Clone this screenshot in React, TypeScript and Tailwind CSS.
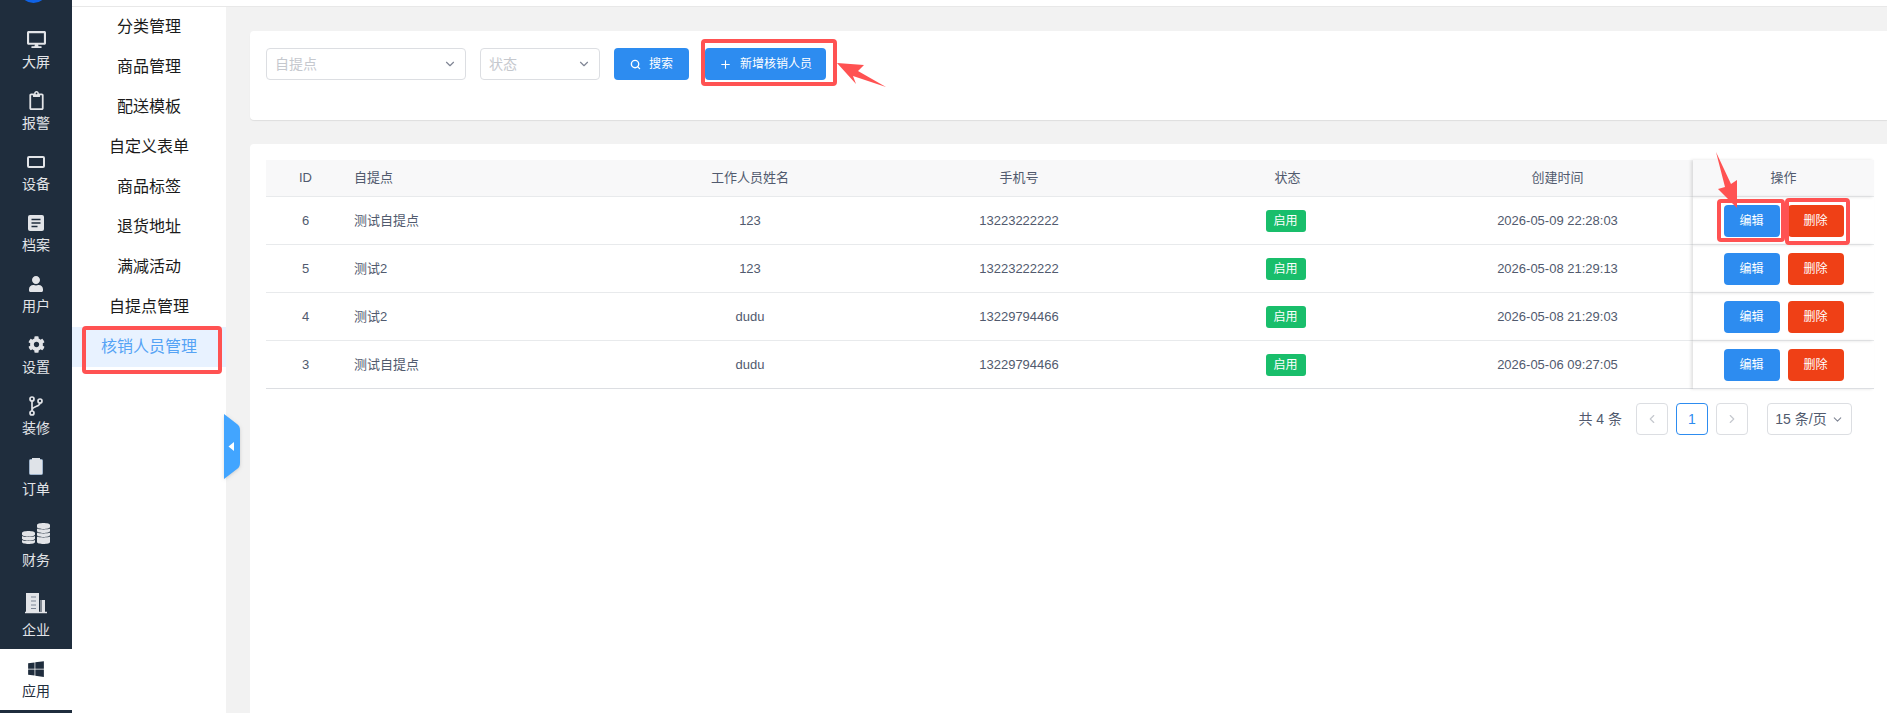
import React from 'react';
import { FaCog, FaDesktop, FaRegClipboard, FaUser, FaWindows } from 'react-icons/fa';
import { ChevronDown, ChevronLeft, ChevronRight, Plus, Search } from 'lucide-react';

const FONT = 'font-["Liberation_Sans","Noto_Sans_CJK_SC",sans-serif]';

const ScreenIcon = () => (
  <svg width="18" height="12" viewBox="0 0 18 12">
    <rect x="1" y="1" width="16" height="10" rx="1" fill="none" stroke="currentColor" strokeWidth="2" />
  </svg>
);

const FileIcon = () => (
  <svg width="16" height="16" viewBox="0 0 16 16">
    <rect width="16" height="16" rx="2" fill="currentColor" />
    <path d="M3.500 4.500h9M3.500 8h9M3.500 11.500h6" stroke="#1f2d3d" strokeWidth="1.600" />
  </svg>
);

const BranchIcon = () => (
  <svg width="14" height="20" viewBox="0 0 14 20" fill="none" stroke="currentColor" strokeWidth="1.700">
    <circle cx="3" cy="3" r="2" />
    <circle cx="11" cy="5" r="2" />
    <circle cx="3" cy="17" r="2" />
    <path d="M3 5v10M11 7c0 4-8 3-8 7" />
  </svg>
);

const OrderIcon = () => (
  <svg width="14" height="17" viewBox="0 0 14 17">
    <rect x="0.500" y="1.500" width="13" height="15" rx="1" fill="#dfe3e8" stroke="#9fb4cc" />
    <rect x="3" y="0" width="8" height="3" fill="#dfe3e8" />
  </svg>
);

const CoinsIcon = () => (
  <svg width="28" height="21" viewBox="0 0 28 21" fill="currentColor">
    <path d="M0 10c0-1.300 3-2 6.500-2s6.500.7 6.500 2v1.500c0 1.300-3 2-6.500 2S0 12.800 0 11.500zM0 13c2 1.200 11 1.200 13 0v2.500c0 1.300-3 2-6.500 2S0 16.800 0 15.500zM0 17c2 1.200 11 1.200 13 0v2c0 1.300-3 2-6.500 2S0 20.300 0 19z" />
    <path d="M15 2c0-1.300 3-2 6.500-2S28 .7 28 2v2c0 1.300-3 2-6.500 2S15 5.300 15 4zM15 5.500c2 1.200 11 1.200 13 0V8c0 1.300-3 2-6.500 2S15 9.300 15 8zM15 9.500c2 1.200 11 1.200 13 0V12c0 1.300-3 2-6.500 2S15 13.300 15 12zM15 13.500c2 1.200 11 1.200 13 0V19c0 1.300-3 2-6.500 2S15 20.300 15 19z" />
  </svg>
);

const BuildingIcon = () => (
  <svg width="22" height="21" viewBox="0 0 22 21">
    <path d="M1 0h13v19H1z" fill="currentColor" />
    <path d="M15 7h5v12h-5z" fill="currentColor" />
    <path d="M0 19.500h22" stroke="currentColor" strokeWidth="1.500" />
    <path d="M6 4h5M6 8h5M6 12h5M6 15.500h5" stroke="#7a8494" strokeWidth="1.200" />
    <path d="M16 7v12" stroke="#1f2d3d" strokeWidth="1" />
  </svg>
);

const railItems: { label: string; icon: React.ReactNode; className?: string }[] = [
  { label: '大屏', icon: <FaDesktop size={19} /> },
  { label: '报警', icon: <FaRegClipboard size={19} /> },
  { label: '设备', icon: <ScreenIcon /> },
  { label: '档案', icon: <FileIcon /> },
  { label: '用户', icon: <FaUser size={16} /> },
  { label: '设置', icon: <FaCog size={17} /> },
  { label: '装修', icon: <BranchIcon /> },
  { label: '订单', icon: <OrderIcon /> },
  { label: '财务', icon: <CoinsIcon />, className: '!h-[76px] !gap-[6px]' },
  { label: '企业', icon: <BuildingIcon />, className: '!h-[65px] !gap-[6px]' },
  { label: '应用', icon: <FaWindows size={18} />, className: 'bg-white text-[#1f2d3d]' },
];

const subMenu = ['分类管理', '商品管理', '配送模板', '自定义表单', '商品标签', '退货地址', '满减活动', '自提点管理', '核销人员管理'];

const rows = [
  { id: 6, point: '测试自提点', name: '123', phone: '13223222222', time: '2026-05-09 22:28:03' },
  { id: 5, point: '测试2', name: '123', phone: '13223222222', time: '2026-05-08 21:29:13' },
  { id: 4, point: '测试2', name: 'dudu', phone: '13229794466', time: '2026-05-08 21:29:03' },
  { id: 3, point: '测试自提点', name: 'dudu', phone: '13229794466', time: '2026-05-06 09:27:05' },
];

const Select: React.FC<{ placeholder: string; className: string }> = ({ placeholder, className }) => (
  <div className={`flex h-8 items-center justify-between rounded border border-[#dcdee2] bg-white pl-2 pr-2 text-sm text-[#c5c8ce] ${className}`}>
    <span>{placeholder}</span>
    <ChevronDown size={14} className="text-[#808695]" />
  </div>
);

const PageBox: React.FC<{ className?: string; children: React.ReactNode }> = ({ className = 'border-[#dcdee2] text-[#c5c8ce]', children }) => (
  <div className={`flex h-8 w-8 items-center justify-center rounded border bg-white ${className}`}>{children}</div>
);

const App: React.FC = () => {
  return (
    <div className={`relative flex h-[713px] w-[1887px] overflow-hidden bg-[#f2f2f2] ${FONT}`}>
      {/* 左侧主导航 */}
      <aside className="relative flex w-[72px] shrink-0 flex-col bg-[#1f2d3d] pt-5 text-[#e2e4e8]">
        <div className="absolute left-[19px] top-[-26px] h-[29px] w-[29px] rounded-full bg-[#0f62e6]" />
        {railItems.map((item) => (
          <div
            key={item.label}
            className={`flex h-[61px] shrink-0 flex-col items-center justify-center gap-[2px] text-sm ${item.className ?? ''}`}
          >
            <span className="flex h-[21px] items-center">{item.icon}</span>
            <span className="leading-5">{item.label}</span>
          </div>
        ))}
      </aside>

      <div className="flex min-w-0 flex-1 flex-col">
        <div className="h-[7px] shrink-0 border-b border-[#e8e8e8] bg-white" />
        <div className="flex min-h-0 flex-1">
          {/* 二级菜单 */}
          <nav className="relative w-[154px] shrink-0 bg-white">
            {subMenu.map((name, i) => (
              <div
                key={name}
                className={`flex h-10 items-center justify-center text-base ${i === subMenu.length - 1 ? 'bg-[#e8f2ff] text-[#55a3f5]' : 'text-[#1a1a1a]'}`}
              >
                {name}
              </div>
            ))}
            <svg className="absolute left-[152px] top-[407px] drop-shadow" width="16" height="65" viewBox="0 0 16 65">
              <path d="M0 0L13 10Q16 12 16 16V49Q16 53 13 55L0 65Z" fill="#42a5ff" />
              <path d="M10 28V37L4.500 32.500Z" fill="#fff" />
            </svg>
          </nav>

          <main className="min-w-0 flex-1 pl-6 pt-6 text-[13px] text-[#515a6e]">
            <section className="flex h-[89px] items-start gap-[14px] rounded-l bg-white pl-4 pt-[17px] shadow-[0_1px_1px_rgba(0,0,0,0.08)]">
              <Select placeholder="自提点" className="w-[200px]" />
              <Select placeholder="状态" className="w-[120px]" />
              <button className="flex h-8 w-[75px] items-center justify-center gap-2 rounded bg-[#2d8cf0] text-xs text-white">
                <Search size={11} strokeWidth={3} />
                搜索
              </button>
              <button className="ml-[2px] flex h-8 w-[121px] items-center justify-center gap-2 rounded bg-[#2d8cf0] text-xs text-white">
                <Plus size={13} />
                新增核销人员
              </button>
            </section>

            <section className="mt-6 h-[600px] rounded-l bg-white pl-4 pt-4">
              <table className="w-[1608px] table-fixed border-separate border-spacing-0">
                <colgroup>
                  <col className="w-[79px]" />
                  <col className="w-[270px]" />
                  <col className="w-[270px]" />
                  <col className="w-[268px]" />
                  <col className="w-[269px]" />
                  <col className="w-[271px]" />
                  <col className="w-[181px]" />
                </colgroup>
                <thead>
                  <tr className="bg-[#f8f8f9] [&>th]:h-[37px] [&>th]:border-b [&>th]:border-[#e8eaec] [&>th]:font-normal">
                    <th>ID</th>
                    <th className="pl-[9px] text-left">自提点</th>
                    <th>工作人员姓名</th>
                    <th>手机号</th>
                    <th>状态</th>
                    <th>创建时间</th>
                    <th className="shadow-[-2px_0_3px_rgba(0,0,0,0.12)]">操作</th>
                  </tr>
                </thead>
                <tbody>
                  {rows.map((row, i) => (
                    <tr key={row.id + row.time} className={`text-center [&>td]:h-12 [&>td]:border-b ${i === rows.length - 1 ? '[&>td]:border-[#dcdee2]' : '[&>td]:border-[#e8eaec]'}`}>
                      <td>{row.id}</td>
                      <td className="pl-[9px] text-left">{row.point}</td>
                      <td>{row.name}</td>
                      <td>{row.phone}</td>
                      <td>
                        <span className="mr-1 inline-flex h-[22px] w-10 items-center justify-center rounded-[3px] bg-[#19be6b] text-xs text-white">启用</span>
                      </td>
                      <td>{row.time}</td>
                      <td className="shadow-[-2px_0_3px_rgba(0,0,0,0.12)]">
                        <div className="flex justify-center gap-2">
                          <button className="h-8 w-14 rounded bg-[#2d8cf0] text-xs text-white">编辑</button>
                          <button className="h-8 w-14 rounded bg-[#ef4016] text-xs text-white">删除</button>
                        </div>
                      </td>
                    </tr>
                  ))}
                </tbody>
              </table>

              <div className="mt-[14px] flex w-[1586px] items-center justify-end text-sm text-[#515a6e]">
                <span className="mr-[14px]">共 4 条</span>
                <div className="flex gap-2">
                  <PageBox><ChevronLeft size={14} /></PageBox>
                  <PageBox className="border-[#2d8cf0] text-[#2d8cf0]">1</PageBox>
                  <PageBox><ChevronRight size={14} /></PageBox>
                </div>
                <div className="ml-[19px] flex h-8 w-[85px] items-center justify-center gap-1 rounded border border-[#dcdee2]">
                  15 条/页
                  <ChevronDown size={13} className="text-[#808695]" />
                </div>
              </div>
            </section>
          </main>
        </div>
      </div>

      {/* 截图上的红色标注 */}
      <div className="absolute left-[82px] top-[326px] h-[48px] w-[140px] rounded-sm border-4 border-[#ff5252]" />
      <div className="absolute left-[701px] top-[39px] h-[47px] w-[136px] rounded-sm border-4 border-[#ff5252]" />
      <div className="absolute left-[1717px] top-[199px] h-[43px] w-[68px] rounded-sm border-4 border-[#ff5252]" />
      <div className="absolute left-[1785px] top-[198px] h-[47px] w-[65px] rounded-sm border-4 border-[#ff5252]" />
      <svg className="absolute left-0 top-0" width="1887" height="713" viewBox="0 0 1887 713">
        <path d="M837 63L864 65L858 71L886 87L853 76L856 84Z" fill="#ff5252" />
        <path d="M1716 152L1731 184L1737 180L1737 208L1718 189L1725 187Z" fill="#ff5252" />
      </svg>
    </div>
  );
};

export default App;
